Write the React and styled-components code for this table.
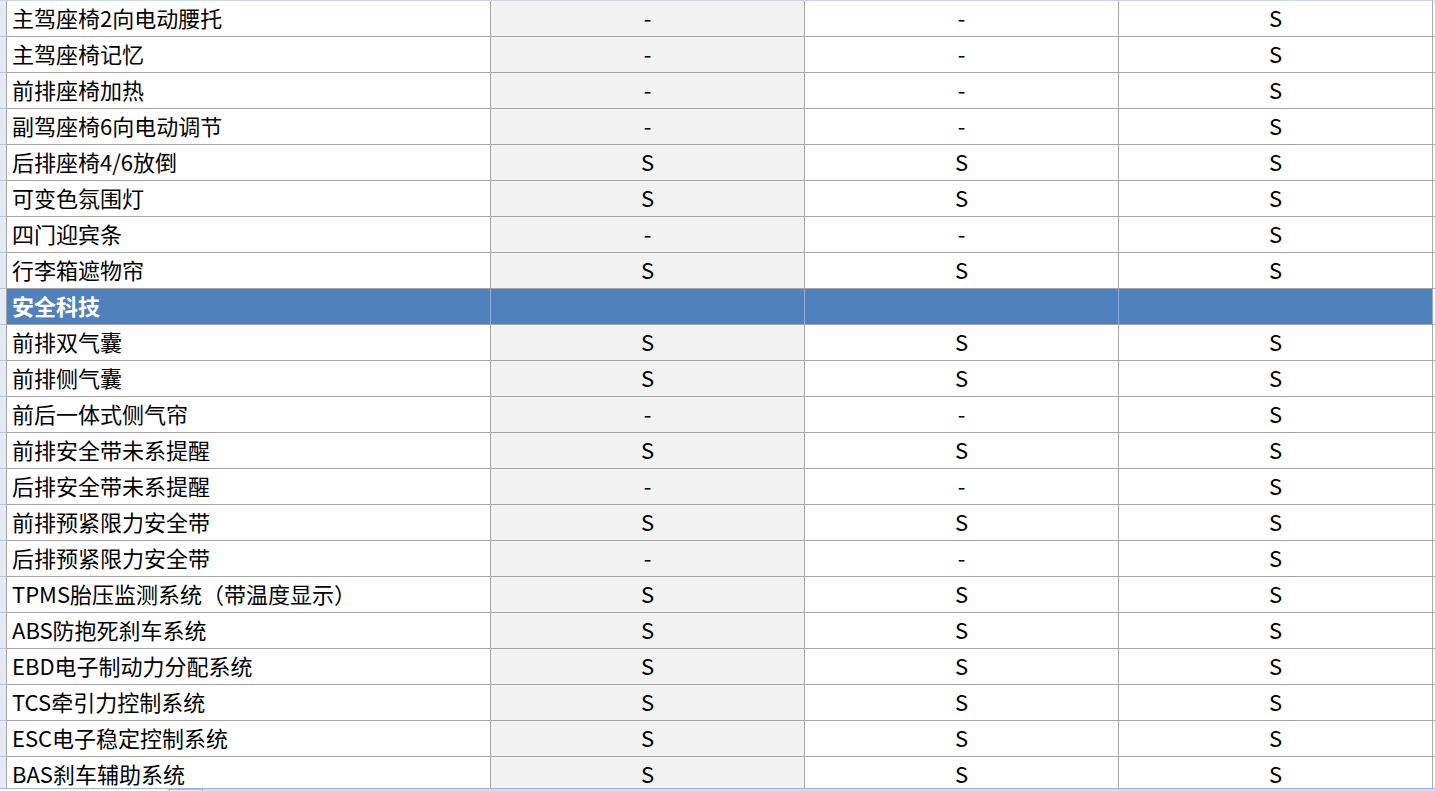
import React from 'react';
import styled, { createGlobalStyle, css } from 'styled-components';

const GlobalStyle = createGlobalStyle`
  html, body {
    margin: 0;
    padding: 0;
    background: #ffffff;
    overflow: hidden;
  }
  body {
    font-family: "Noto Sans CJK SC", "Noto Sans", sans-serif;
  }
`;

const Page = styled.div`
  width: 1435px;
  height: 791px;
  display: flex;
  flex-direction: column;
  overflow: hidden;
`;

const Sheet = styled.div`
  height: 788px;
  flex: none;
  overflow: hidden;
  border-top: 1px solid #c9d6e8;
  box-sizing: border-box;
`;

const Row = styled.div`
  display: grid;
  grid-template-columns: 7px 484px 314px 314px 314px 1fr;
  height: 36px;
`;

const RowHead = styled.div`
  background: #e4ebf5;
  border-right: 1px solid #a5a5a5;
  border-bottom: 1px solid #b8c6da;
`;

const Cell = styled.div`
  box-sizing: border-box;
  border-right: 1px solid ${p => (p.$section ? '#8fadd6' : '#a5a5a5')};
  border-bottom: 1px solid #a5a5a5;
  display: flex;
  align-items: center;
  padding-bottom: 3px;
  font-size: 22px;
  color: #000000;
  white-space: nowrap;
  ${p => p.$label && css`
    padding-left: 5px;
  `}
  ${p => p.$center && css`
    justify-content: center;
  `}
  ${p => p.$shade && !p.$section && css`
    background: #f2f2f2;
  `}
  ${p => p.$section && css`
    background: #4f81bd;
    color: #ffffff;
    font-weight: 700;
  `}
`;

const Filler = styled.div`
  border-bottom: 1px solid #a5a5a5;
`;

const TabBar = styled.div`
  flex: 1;
  display: flex;
  align-items: flex-start;
  border-top: 1px solid #9db4d4;
  background: linear-gradient(#c6d6ec, #dfe8f4);
  overflow: hidden;
`;

const Tab = styled.div`
  height: 24px;
  padding: 0 10px 0 53px;
  width: 104px;
  background: #ffffff;
  font-size: 15px;
  line-height: 22px;
  color: #222;
`;

const TabScroll = styled.div`
  width: 32px;
  height: 20px;
  margin-left: 2px;
  background: #f4f6fa;
  border: 1px solid #a9b8cc;
`;

const rows = [
  ['主驾座椅2向电动腰托', '-', '-', 'S'],
  ['主驾座椅记忆', '-', '-', 'S'],
  ['前排座椅加热', '-', '-', 'S'],
  ['副驾座椅6向电动调节', '-', '-', 'S'],
  ['后排座椅4/6放倒', 'S', 'S', 'S'],
  ['可变色氛围灯', 'S', 'S', 'S'],
  ['四门迎宾条', '-', '-', 'S'],
  ['行李箱遮物帘', 'S', 'S', 'S'],
  ['安全科技'],
  ['前排双气囊', 'S', 'S', 'S'],
  ['前排侧气囊', 'S', 'S', 'S'],
  ['前后一体式侧气帘', '-', '-', 'S'],
  ['前排安全带未系提醒', 'S', 'S', 'S'],
  ['后排安全带未系提醒', '-', '-', 'S'],
  ['前排预紧限力安全带', 'S', 'S', 'S'],
  ['后排预紧限力安全带', '-', '-', 'S'],
  ['TPMS胎压监测系统（带温度显示）', 'S', 'S', 'S'],
  ['ABS防抱死刹车系统', 'S', 'S', 'S'],
  ['EBD电子制动力分配系统', 'S', 'S', 'S'],
  ['TCS牵引力控制系统', 'S', 'S', 'S'],
  ['ESC电子稳定控制系统', 'S', 'S', 'S'],
  ['BAS刹车辅助系统', 'S', 'S', 'S'],
];

const App = () => {
  return (
    <>
      <GlobalStyle />
      <Page>
        <Sheet>
          {rows.map(([label, ...vals], i) => {
            const section = vals.length === 0;
            const cells = section ? ['', '', ''] : vals;
            return (
              <Row key={i}>
                <RowHead />
                <Cell $label $section={section}>{label}</Cell>
                {cells.map((v, j) => (
                  <Cell key={j} $center $shade={j === 0} $section={section}>
                    {v}
                  </Cell>
                ))}
                <Filler />
              </Row>
            );
          })}
        </Sheet>
        <TabBar>
          <Tab>现代配置表</Tab>
          <TabScroll />
        </TabBar>
      </Page>
    </>
  );
};

export default App;
